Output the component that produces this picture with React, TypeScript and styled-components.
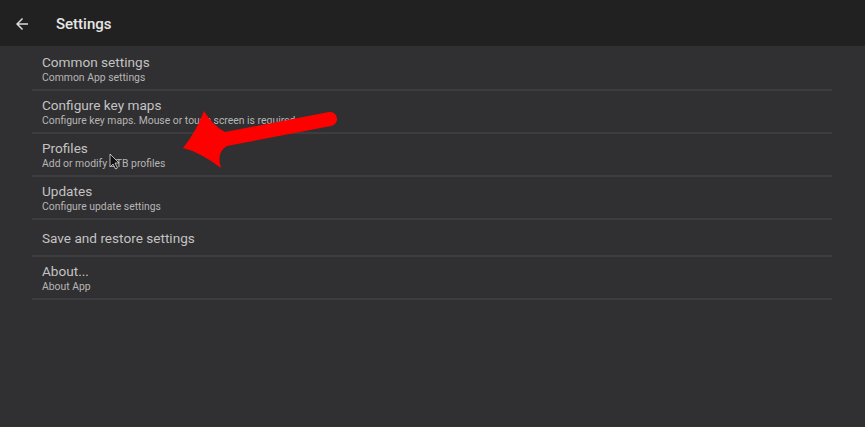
import React from "react";
import styled, { createGlobalStyle } from "styled-components";

const Global = createGlobalStyle`
  html, body { margin: 0; padding: 0; background: #302f31; }
  body { font-family: Roboto, "Noto Sans", "Liberation Sans", sans-serif; }
  * { box-sizing: border-box; }
`;

const Page = styled.div`
  position: relative;
  width: 865px;
  height: 427px;
  background: #302f31;
  overflow: hidden;
`;

const AppBar = styled.header`
  height: 46px;
  background: #212121;
  display: flex;
  align-items: center;
  padding-left: 13px;
  padding-top: 1px;
  gap: 25px;
`;

const BackButton = styled.span`
  display: flex;
  width: 18px;
  height: 18px;
  color: #dcdcdc;
`;

const Title = styled.h1`
  margin: 0;
  font-size: 15px;
  font-weight: 500;
  color: #e6e6e6;
`;

const List = styled.div`
  margin: 0 33px 0 32px;
  padding-top: 2px;
`;

const Row = styled.div`
  display: flex;
  flex-direction: column;
  justify-content: center;
  min-height: 37px;
  padding: 6px 0 4px 10px;
  border-bottom: 2px solid #3d3c3f;
`;

const RowTitle = styled.div`
  font-size: 13.6px;
  line-height: 17px;
  color: #c3c3c3;
`;

const RowSub = styled.div`
  font-size: 10.4px;
  line-height: 14px;
  color: #b6b6b6;
`;

const Overlay = styled.svg`
  position: absolute;
  left: 0;
  top: 0;
  pointer-events: none;
`;

const items: { title: string; sub?: string }[] = [
  { title: "Common settings", sub: "Common App settings" },
  { title: "Configure key maps", sub: "Configure key maps. Mouse or touch screen is required" },
  { title: "Profiles", sub: "Add or modify STB profiles" },
  { title: "Updates", sub: "Configure update settings" },
  { title: "Save and restore settings" },
  { title: "About...", sub: "About App" },
];

export default function App() {
  return (
    <Page>
      <Global />
      <AppBar>
        <BackButton>
          <svg width="18" height="18" viewBox="0 0 24 24" fill="currentColor">
            <path d="M20 11H7.83l5.59-5.59L12 4l-8 8 8 8 1.41-1.41L7.83 13H20v-2z" />
          </svg>
        </BackButton>
        <Title>Settings</Title>
      </AppBar>
      <List>
        {items.map((it) => (
          <Row key={it.title}>
            <RowTitle>{it.title}</RowTitle>
            {it.sub && <RowSub>{it.sub}</RowSub>}
          </Row>
        ))}
      </List>
      <Overlay width="865" height="427" viewBox="0 0 865 427">
        <path
          d="M183,148 Q196,132 204,111 Q212,125 225,132 L329,112 A7,7 0 0 1 331,126 L227,146 Q216,152 221,168 Q200,152 183,148 Z"
          fill="#ff0000"
        />
        <path
          d="M110,154 L110,167 L113,164 L115.5,169 L117.5,168 L115,163 L119,163 Z"
          fill="#111"
          stroke="#ddd"
          strokeWidth="0.8"
        />
      </Overlay>
    </Page>
  );
}
